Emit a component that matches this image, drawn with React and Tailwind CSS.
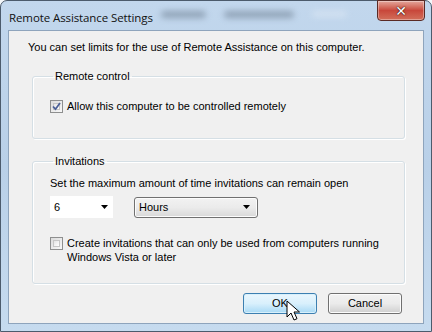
import React from "react";

function Arrow({ className = "" }) {
  return (
    <svg width="7" height="4" viewBox="0 0 7 4" className={className}>
      <path d="M0 0h7L3.5 4z" fill="#000" />
    </svg>
  );
}

function Check({ checked }) {
  return (
    <span className="w-[13px] h-[13px] shrink-0 border border-[#8e8f8f] bg-gradient-to-br from-[#dcdcdc] to-[#f8f8f8] p-[2px] flex">
      <span className="flex-1 border border-[#c6c6c6] bg-gradient-to-br from-[#e4e4e4] to-[#ffffff] flex items-center justify-center">
        {checked && (
          <svg width="9" height="9" viewBox="0 0 9 9" className="-m-[2px]">
            <path d="M1 4.5l2.5 2.7L8 1" stroke="#4a5f97" strokeWidth="1.8" fill="none" />
          </svg>
        )}
      </span>
    </span>
  );
}

function Group({ title, className = "", children }) {
  return (
    <fieldset className={`border border-[#d5dfe5] rounded-[3px] shadow-[inset_1px_1px_0_#fff,1px_1px_0_#fff] ${className}`}>
      <legend className="ml-[3px] px-[2px] leading-[14px]">{title}</legend>
      {children}
    </fieldset>
  );
}

function Cursor() {
  return (
    <svg width="14" height="22" viewBox="0 0 14 22" className="absolute left-[286px] top-[300px]">
      <path d="M1 1v16l4-4 3 7 3-1.3-3-6.7h5.5z" fill="#fff" stroke="#000" strokeWidth="1" strokeLinejoin="round" />
    </svg>
  );
}

export default function App() {
  return (
    <div className="relative w-[432px] h-[332px] overflow-hidden bg-[#f4f7fa]">
      <div className="w-full h-full flex flex-col rounded-t-[7px] border border-[#4c5b6c] bg-gradient-to-b from-[#c2d7ed] via-[#b9d0e8] to-[#c6dbef] font-['Liberation_Sans',Arial,sans-serif] text-[11px] text-black">
        <div className="relative h-[29px] shrink-0 flex items-start justify-between pl-[8px] pr-[6px]">
          <div className="absolute left-[160px] top-[10px] flex gap-[18px] blur-[3px] opacity-60">
            <span className="w-[45px] h-[7px] bg-[#6e7f92] rounded-full" />
            <span className="w-[70px] h-[7px] bg-[#6e7f92] rounded-full" />
            <span className="w-[35px] h-[6px] bg-[#dfe9f4] rounded-full" />
          </div>
          <span className="relative mt-[8px] font-['Open_Sans',sans-serif] text-[11.5px] tracking-[-0.1px] text-[#111]">
            Remote Assistance Settings
          </span>
          <div className="relative -mt-px w-[48px] h-[21px] rounded-b-[4px] border border-[#5a2a25] bg-gradient-to-b from-[#e2a79d] via-[#c8473b] to-[#d26e5a] flex items-center justify-center shadow-[inset_0_0_0_1px_rgba(255,255,255,0.35)]">
            <span className="text-white font-bold text-[14px] leading-none font-['DejaVu_Sans',sans-serif] [text-shadow:0_0_1px_#000,0_0_2px_#5b1b12]">
              ✕
            </span>
          </div>
        </div>
        <div className="flex-1 mx-[7px] mb-[7px] border border-[#8ea4bc] bg-[#f0f0f0] flex flex-col pl-[19px] pr-[18px] pt-[9px]">
          <p className="leading-[14px]">You can set limits for the use of Remote Assistance on this computer.</p>

          <Group title="Remote control" className="ml-[4px] mt-[15px] h-[70px] pl-[17px] pt-[16px]">
            <label className="flex items-center gap-[4px] leading-[14px]">
              <Check checked />
              Allow this computer to be controlled remotely
            </label>
          </Group>

          <Group title="Invitations" className="ml-[4px] mt-[15px] h-[130px] pl-[17px] pt-[8px]">
            <p className="leading-[14px]">Set the maximum amount of time invitations can remain open</p>
            <div className="flex items-center gap-[21px] mt-[6px]">
              <div className="w-[63px] h-[22px] bg-white flex items-center justify-between pl-[4px] pr-[5px]">
                <span>6</span>
                <Arrow />
              </div>
              <div className="w-[124px] h-[21px] rounded-[3px] border border-[#707070] bg-gradient-to-b from-[#f2f2f2] via-[#ebebeb] to-[#d8d8d8] flex items-center justify-between pl-[4px] pr-[7px] shadow-[inset_0_0_0_1px_#fcfcfc]">
                <span>Hours</span>
                <Arrow />
              </div>
            </div>
            <div className="flex items-start gap-[4px] mt-[18px] leading-[14px]">
              <span className="mt-[1px] flex"><Check /></span>
              <span className="whitespace-nowrap">
                Create invitations that can only be used from computers running
                <br />
                Windows Vista or later
              </span>
            </div>
          </Group>

          <div className="flex justify-end gap-[11px] mt-[9px] pr-[3px]">
            <button className="w-[74px] h-[21px] rounded-[3px] border border-[#3c7fb1] bg-gradient-to-b from-[#eaf6fd] via-[#d9f0fc] to-[#a7d9f5] shadow-[inset_0_0_0_1px_#d8f0fb] leading-none">
              OK
            </button>
            <button className="w-[74px] h-[21px] rounded-[3px] border border-[#707070] bg-gradient-to-b from-[#f2f2f2] via-[#ebebeb] to-[#cfcfcf] shadow-[inset_0_0_0_1px_#fcfcfc] leading-none">
              Cancel
            </button>
          </div>
        </div>
      </div>
      <Cursor />
    </div>
  );
}
